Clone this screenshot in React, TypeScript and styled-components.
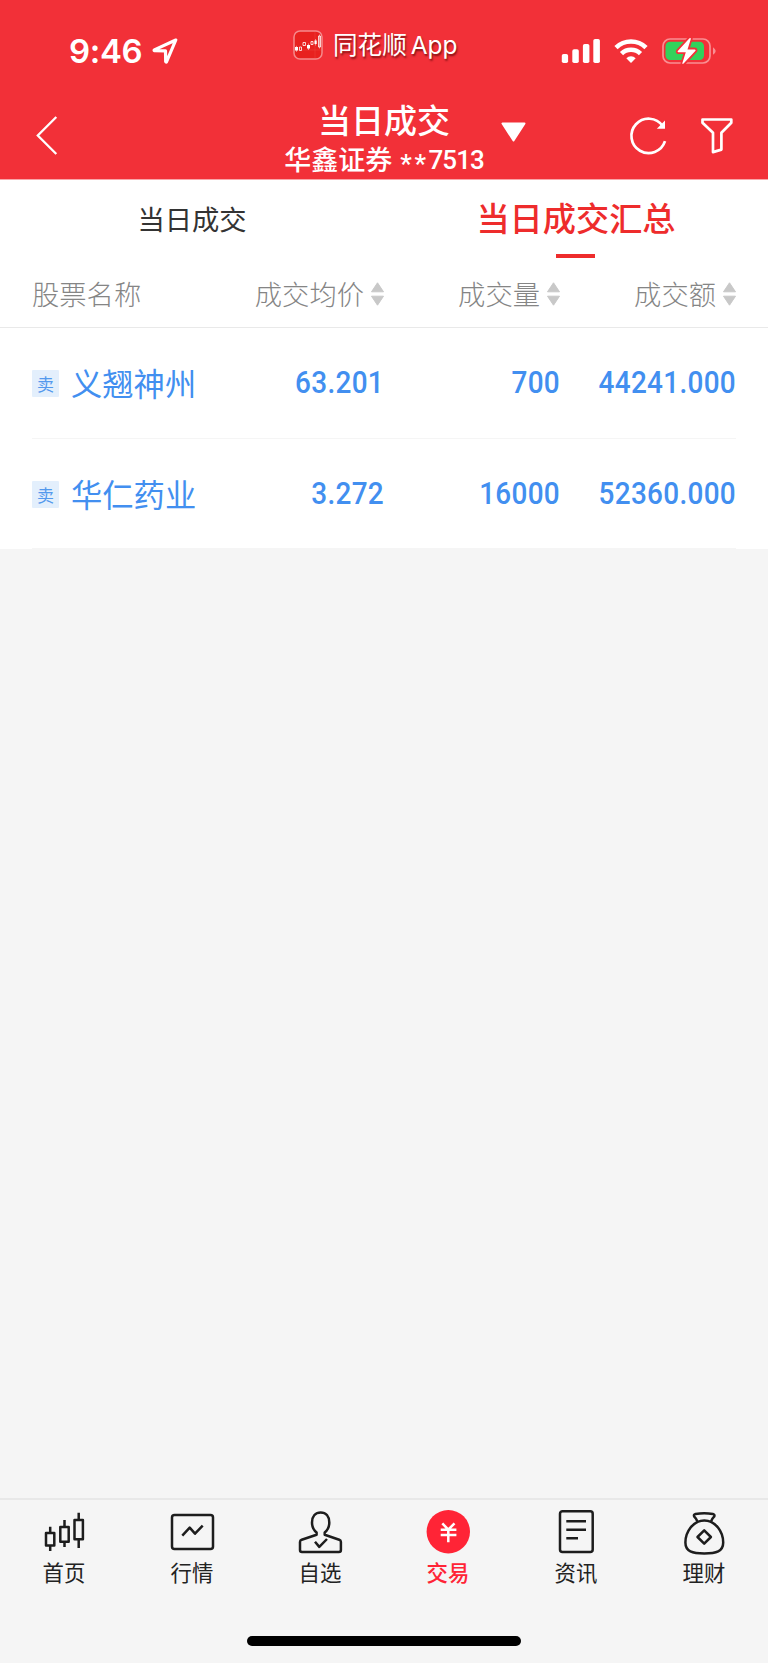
import React from "react";
import styled, { createGlobalStyle } from "styled-components";

const GlobalStyle = createGlobalStyle`
  * { box-sizing: border-box; }
  body {
    margin: 0;
    background: #f5f5f5;
    font-family: "Noto Sans CJK SC", sans-serif;
  }
  svg { display: block; flex: none; overflow: visible; }
`;

const Screen = styled.div`
  width: 768px;
  height: 1663px;
  display: flex;
  flex-direction: column;
  overflow: hidden;
  background: #f5f5f5;
`;

const Header = styled.header`
  height: 180px;
  flex: none;
  color: #fff;
  background: #f23038;
  border-bottom: 1px solid #f9a5a8;
`;

const StatusBar = styled.div`
  height: 95px;
  display: grid;
  grid-template-columns: 293px 268px 1fr;
`;

const Clock = styled.div`
  display: flex;
  align-items: flex-start;
  gap: 10px;
  padding: 31px 0 0 69px;
  font: 600 33px/40px Inter, sans-serif;
  letter-spacing: -0.35px;

  svg { margin-top: 7px; }
`;

const SourceApp = styled.div`
  display: flex;
  align-items: flex-start;
  padding-top: 30px;
`;

const SourceName = styled.span`
  margin: -2px 0 0 10px;
  font-size: 24.6px;
  line-height: 30px;
  white-space: nowrap;
  text-shadow: 1px 2px 2px rgba(70, 0, 0, 0.65);
`;

const SourceLatin = styled.span`
  margin-left: 4px;
  font-family: Inter, sans-serif;
  font-size: 24.4px;
`;

const Indicators = styled.div`
  display: flex;
  align-items: flex-start;
  padding-top: 38px;
`;

const NavBar = styled.div`
  height: 84px;
  display: grid;
  grid-template-columns: 284px 200px 1fr;
`;

const BackButton = styled.div`
  padding: 21px 0 0 35px;
`;

const Titles = styled.div`
  display: flex;
  flex-direction: column;
  align-items: center;
  white-space: nowrap;
  font-family: "Liberation Sans", "Noto Sans CJK SC", sans-serif;
`;

const Title = styled.div`
  margin-top: 7px;
  font-size: 33px;
  font-weight: 500;
  line-height: 40px;
`;

const Account = styled.div`
  display: flex;
  align-items: flex-start;
  margin-top: 4px;
  font-size: 27px;
  font-weight: 500;
  line-height: 30px;
`;

const AccountNumber = styled.span`
  display: flex;
  align-items: flex-start;
  margin-left: 8px;
  font: 500 26px/28px Roboto, sans-serif;
  letter-spacing: -1px;
`;

const Mask = styled.span`
  padding-top: 4px;
  letter-spacing: 2.6px;
`;

const NavTools = styled.div`
  display: flex;
  align-items: flex-start;
  padding: 22px 0 0 17px;
`;

const Tabs = styled.div`
  height: 82px;
  flex: none;
  display: grid;
  grid-template-columns: 1fr 1fr;
  background: #fff;
`;

const Tab = styled.div<{ $active?: boolean }>`
  display: flex;
  flex-direction: column;
  align-items: center;
  padding-top: ${(p) => (p.$active ? 17 : 18)}px;
  font-size: ${(p) => (p.$active ? 33.2 : 27.3)}px;
  font-weight: ${(p) => (p.$active ? 500 : 400)};
  line-height: 40px;
  color: ${(p) => (p.$active ? "#ee2c2c" : "#333")};

  &::after {
    content: "";
    width: 39px;
    height: 4px;
    margin: 17px 1px 0 0;
    background: ${(p) => (p.$active ? "#ee2c2c" : "transparent")};
  }
`;

const gridColumns = "170px 182px 176px 176px";

const TableHead = styled.div`
  height: 66px;
  flex: none;
  display: grid;
  grid-template-columns: ${gridColumns};
  padding: 10px 32px 0;
  font-size: 27.3px;
  font-weight: 300;
  line-height: 42px;
  color: #858585;
  background: #fff;
  border-bottom: 1px solid #e9e9e9;
`;

const HeadCell = styled.div<{ $end?: boolean }>`
  display: flex;
  justify-content: ${(p) => (p.$end ? "flex-end" : "flex-start")};
  align-items: flex-start;
  white-space: nowrap;

  svg { margin: 10px 0 0 7px; }
`;

const Rows = styled.div`
  flex: none;
  padding: 0 32px;
  background: #fff;
`;

const Row = styled.div`
  height: 111px;
  display: grid;
  grid-template-columns: ${gridColumns};
  padding-top: 35px;
  color: #428ff0;
  border-bottom: 1px solid #f5f5f5;

  & + & {
    height: 110px;
  }
`;

const Stock = styled.div`
  display: flex;
  align-items: flex-start;
  white-space: nowrap;
`;

const SideTag = styled.span`
  width: 27px;
  height: 27px;
  margin-top: 7px;
  border-radius: 1px;
  font-size: 17px;
  line-height: 27px;
  text-align: center;
  color: #5399ed;
  background: #e3effc;
`;

const StockName = styled.span`
  margin-left: 12px;
  font-size: 31.3px;
  line-height: 40px;
`;

const Amount = styled.div`
  text-align: right;
  font: 500 31px/39px Roboto, sans-serif;
  letter-spacing: 0.35px;
  transform: scaleX(0.9);
  transform-origin: right center;
`;

const Spacer = styled.div`
  flex: 1;
`;

const TabBar = styled.nav`
  height: 165px;
  flex: none;
  display: flex;
  flex-direction: column;
  align-items: center;
  border-top: 2px solid #e8e8e8;
`;

const TabItems = styled.div`
  width: 100%;
  height: 136px;
  display: grid;
  grid-template-columns: repeat(6, 1fr);
`;

const TabItem = styled.div<{ $active?: boolean }>`
  display: flex;
  flex-direction: column;
  align-items: center;
  padding-top: 8px;
  font-size: 21.4px;
  line-height: 32px;
  font-weight: ${(p) => (p.$active ? 500 : 400)};
  color: ${(p) => (p.$active ? "#ff2436" : "#222")};
`;

const HomeIndicator = styled.div`
  width: 274px;
  height: 10px;
  border-radius: 5px;
  background: #000;
`;

const LocationIcon = () => (
  <svg width="26" height="26" viewBox="0 0 26 26" fill="none" stroke="#fff" strokeWidth="3.2" strokeLinejoin="round">
    <path d="M23.800 2 2.300 11.900q-.6.5.3.8l10.900.2.200 10.800q.4.900.9 0Z" />
  </svg>
);

const AppBadge = () => (
  <svg width="30" height="30" viewBox="0 0 30 30">
    <rect x="1" y="1" width="28" height="28" rx="6" fill="#e8211f" stroke="#f58a8c" strokeWidth="1.500" />
    <path d="M22 2v26M2 20h26" stroke="#ef4b4a" strokeWidth=".4" />
    <path d="M2 17h3v3.500H2ZM14 15h3v3.500h-3ZM21.500 10.500h2.200v3.500h-2.200Z" fill="#fff" />
    <path d="M6.500 17h2v3.500h-2ZM10 12.500h2.500v3H10ZM18 11.500h2v3h-2ZM25.500 6h2v11h-2Z" fill="none" stroke="#fff" strokeWidth=".8" />
    <path d="M3.500 15.800v6M15.500 13.500v6.500M22.600 9v6.500M26.500 4.500v14" stroke="#fff" strokeWidth=".5" />
  </svg>
);

const SignalIcon = () => (
  <svg width="39" height="26" viewBox="0 0 39 26" fill="#fff">
    <rect x="0.800" y="16" width="6.300" height="9" rx="1.800" />
    <rect x="11.300" y="11.300" width="6.500" height="13.700" rx="1.800" />
    <rect x="21.900" y="6" width="6.500" height="19" rx="1.800" />
    <rect x="32.300" y="1" width="6.600" height="24" rx="1.800" />
  </svg>
);

const WifiIcon = () => (
  <svg width="34" height="26" viewBox="0 0 34 26" fill="none" stroke="#fff" strokeWidth="4.600">
    <path d="M2 9.600a21.500 21.500 0 0 1 30 0" />
    <path d="M7.500 15.600a13.700 13.700 0 0 1 19 0" />
    <path d="M17 25 12.300 20.200a6.800 6.800 0 0 1 9.400 0Z" fill="#fff" stroke="none" />
  </svg>
);

const BatteryIcon = () => (
  <svg width="54" height="28" viewBox="0 0 54 28">
    <rect x="1" y="1" width="47" height="24" rx="7" fill="none" stroke="#f98f93" strokeWidth="1.700" />
    <path d="M51 9.200q5.400 3.800 0 7.600Z" fill="#f98f93" />
    <rect x="3.500" y="3.700" width="38.500" height="18.300" rx="4.500" fill="#32d25b" />
    <path
      d="M27.500.2 15.800 13q-.6 1.200.7 1.300h7.300l-3.500 11q.2 1.300 1.300.3L33.500 12.700q.6-1.200-.7-1.300h-7.300L28.900.7q-.3-1.200-1.400-.5Z"
      fill="#fff"
      stroke="#f23038"
      strokeWidth="3.600"
      paintOrder="stroke"
    />
  </svg>
);

const BackIcon = () => (
  <svg width="22" height="40" viewBox="0 0 22 40" fill="none" stroke="#fff" strokeWidth="2.300">
    <path d="M21.300 1 2.800 19.500 21.300 38" />
  </svg>
);

const Caret = styled.svg.attrs({ width: 25, height: 21, viewBox: "0 0 25 21" })`
  margin-top: 5px;
`;

const Refresh = styled.svg.attrs({ width: 38, height: 40, viewBox: "0 0 38 40" })`
  margin-left: 103px;
`;

const Filter = styled.svg.attrs({ width: 32, height: 37, viewBox: "0 0 32 37" })`
  margin-left: 34px;
`;

const CaretIcon = () => (
  <Caret>
    <path d="M1.500 1.500h22L12.500 18.500Z" fill="#fff" stroke="#fff" strokeWidth="2" strokeLinejoin="round" />
  </Caret>
);

const RefreshIcon = () => (
  <Refresh fill="none" stroke="#fff" strokeWidth="2.700">
    <path d="M36 24.200A17.200 17.200 0 1 1 33.700 9" />
    <path d="M36 3.500v8.200h-8.200Z" fill="#fff" stroke="none" />
  </Refresh>
);

const FilterIcon = () => (
  <Filter fill="none" stroke="#fff" strokeWidth="2.700" strokeLinejoin="round">
    <path d="M1.500 2.500h28.800v3.200L20.400 15.800v16.800l-8.400 2.500V15.800L1.500 5.700Z" />
  </Filter>
);

const SortIcon = () => (
  <svg width="13" height="24" viewBox="0 0 13 24" fill="#c8c8c8" stroke="#c8c8c8" strokeLinejoin="round">
    <path d="M6.500 .8 12.500 9.800H.5ZM.5 14.200h12L6.500 23.200Z" />
  </svg>
);

const Glyph = styled.svg.attrs({ width: 48, height: 48, viewBox: "0 0 48 48" })`
  fill: none;
  stroke: #1d1d1d;
  stroke-width: 2.5;
  stroke-linejoin: round;
`;

const HomeGlyph = () => (
  <Glyph>
    <path d="M6 25h8.300v12.500H6ZM20.300 19h8.400v14.700h-8.400ZM34.500 12h8.400v19.300h-8.400Z" />
    <path d="M10.200 18.700V25M10.200 37.500V43M24.500 12v7M24.500 33.700V39M38.700 4.700V12M38.700 31.300V40" />
  </Glyph>
);

const QuotesGlyph = () => (
  <Glyph>
    <rect x="4" y="7" width="41" height="34" rx="2.500" />
    <path d="m14.300 27.700 7.400-8 5.300 6 7.700-8" />
  </Glyph>
);

const WatchGlyph = () => (
  <Glyph>
    <path d="M20.600 24.500C17.500 22 16 18.800 16 14.500 16 8.300 19.500 4.400 24.700 4.400s8.600 3.900 8.600 10.100c0 4.300-1.500 7.500-4.600 10v2.200l14.500 5q1.700.7 1.700 2.300v8q0 2-2 2H6q-2 0-2-2v-8q0-1.600 1.700-2.300l14.900-5Z" />
    <path d="m19 33.700 4.300 5.200 7.700-7.900" />
  </Glyph>
);

const TradeGlyph = () => (
  <Glyph>
    <circle cx="24.300" cy="23.700" r="21.700" fill="#ff2436" stroke="none" />
    <path d="m18.300 15.300 6 6.400 6.200-6.400M16.700 21.700h15.700M16.700 27h15.700M24.300 21.700v12.500" stroke="#fff" />
  </Glyph>
);

const NewsGlyph = () => (
  <Glyph>
    <rect x="8" y="3.200" width="32.700" height="40.800" rx="2.500" />
    <path d="M14.300 13.300H34M14.300 21.700H34M14.300 30.300H26" />
  </Glyph>
);

const WealthGlyph = () => (
  <Glyph>
    <path d="M17.300 13.300q-1.200-2.800-3-4.600c-.9-1.400-.2-2.400 1.200-2.800q8.700-1.500 17.400 0c1.500.4 2.100 1.400 1.200 2.800q-1.800 1.800-3 4.600" />
    <path d="M24.300 12.500C13 12.500 5.400 24 5.400 34.500c0 9 7 11 18.900 11s18.900-2 18.900-11c0-10.500-7.600-22-18.900-22Z" />
    <path d="m24.200 22.300 6.700 6.700-6.700 6.700-6.700-6.700Z" />
  </Glyph>
);

const trades = [
  { name: "义翘神州", price: "63.201", volume: "700", total: "44241.000" },
  { name: "华仁药业", price: "3.272", volume: "16000", total: "52360.000" },
];

const tabItems = [
  { label: "首页", Icon: HomeGlyph },
  { label: "行情", Icon: QuotesGlyph },
  { label: "自选", Icon: WatchGlyph },
  { label: "交易", Icon: TradeGlyph, active: true },
  { label: "资讯", Icon: NewsGlyph },
  { label: "理财", Icon: WealthGlyph },
];

const IndicatorSlot = styled.span`
  margin-left: 14px;
`;

export default function App() {
  return (
    <Screen>
      <GlobalStyle />
      <Header>
        <StatusBar>
          <Clock>
            <span>9:46</span>
            <LocationIcon />
          </Clock>
          <SourceApp>
            <AppBadge />
            <SourceName>
              同花顺<SourceLatin>App</SourceLatin>
            </SourceName>
          </SourceApp>
          <Indicators>
            <SignalIcon />
            <IndicatorSlot>
              <WifiIcon />
            </IndicatorSlot>
            <IndicatorSlot>
              <BatteryIcon />
            </IndicatorSlot>
          </Indicators>
        </StatusBar>
        <NavBar>
          <BackButton>
            <BackIcon />
          </BackButton>
          <Titles>
            <Title>当日成交</Title>
            <Account>
              华鑫证券
              <AccountNumber>
                <Mask>**</Mask>7513
              </AccountNumber>
            </Account>
          </Titles>
          <NavTools>
            <CaretIcon />
            <RefreshIcon />
            <FilterIcon />
          </NavTools>
        </NavBar>
      </Header>
      <Tabs>
        <Tab>当日成交</Tab>
        <Tab $active>当日成交汇总</Tab>
      </Tabs>
      <TableHead>
        <HeadCell>股票名称</HeadCell>
        {["成交均价", "成交量", "成交额"].map((label) => (
          <HeadCell key={label} $end>
            {label}
            <SortIcon />
          </HeadCell>
        ))}
      </TableHead>
      <Rows>
        {trades.map((t) => (
          <Row key={t.name}>
            <Stock>
              <SideTag>卖</SideTag>
              <StockName>{t.name}</StockName>
            </Stock>
            <Amount>{t.price}</Amount>
            <Amount>{t.volume}</Amount>
            <Amount>{t.total}</Amount>
          </Row>
        ))}
      </Rows>
      <Spacer />
      <TabBar>
        <TabItems>
          {tabItems.map(({ label, Icon, active }) => (
            <TabItem key={label} $active={active}>
              <Icon />
              {label}
            </TabItem>
          ))}
        </TabItems>
        <HomeIndicator />
      </TabBar>
    </Screen>
  );
}
